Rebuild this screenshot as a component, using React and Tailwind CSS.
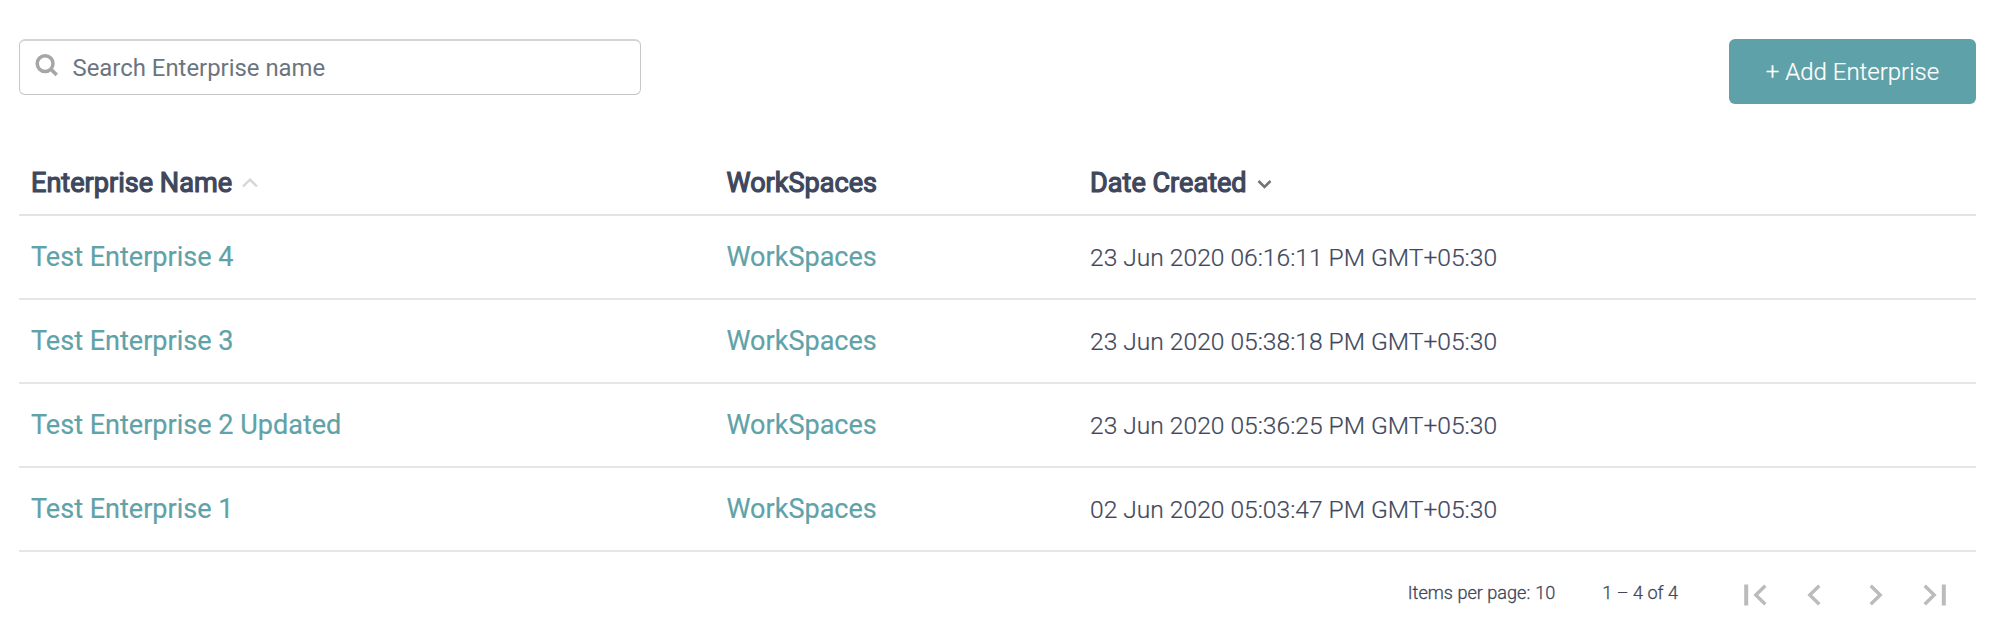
import React from 'react';

const rows = [
  { name: 'Test Enterprise 4', created: '23 Jun 2020 06:16:11 PM GMT+05:30' },
  { name: 'Test Enterprise 3', created: '23 Jun 2020 05:38:18 PM GMT+05:30' },
  { name: 'Test Enterprise 2 Updated', created: '23 Jun 2020 05:36:25 PM GMT+05:30' },
  { name: 'Test Enterprise 1', created: '02 Jun 2020 05:03:47 PM GMT+05:30' },
];

function SearchIcon() {
  return (
    <svg className="size-6" viewBox="0 0 24 24" fill="none" stroke="#a6a6a6">
      <circle cx="10.1" cy="10.6" r="7.9" strokeWidth="3.5" />
      <path d="M15.7 16.1 L21.7 22.1" strokeWidth="3.6" />
    </svg>
  );
}

function PageIcon({ d, bar }) {
  return (
    <svg className="h-6 w-6" viewBox="0 0 24 24" fill="none" stroke="#bbbbbb">
      <path d={d} strokeWidth="3.4" />
      {bar !== undefined && <path d={bar} strokeWidth="4" />}
    </svg>
  );
}

function Toolbar() {
  return (
    <div className="flex items-start justify-between">
      <label className="flex h-14 w-[622px] items-center rounded-[6px] border-x border-b border-t-2 border-x-[#c8c8c8] border-b-[#c4c4c4] border-t-[#d4d4d4] pl-[15px]">
        <span className="-mt-1.5">
          <SearchIcon />
        </span>
        <input
          className="ml-[13.5px] mt-px min-w-0 flex-1 bg-transparent text-[23.9px] leading-8 outline-none placeholder:text-[#6c757d] placeholder:opacity-100"
          placeholder="Search Enterprise name"
        />
      </label>
      <button className="flex h-[65px] w-[247px] items-center justify-center rounded-[6px] bg-[#5fa1a8] text-[24px] font-light leading-8 text-white [-webkit-text-stroke:0.2px_white]">
        + Add Enterprise
      </button>
    </div>
  );
}

function EnterpriseTable() {
  return (
    <div className="mt-12 flex flex-col">
      <div className="grid h-[64px] grid-cols-[695.5px_363.5px_1fr] items-center border-b-2 border-[#e4e4e4] pl-3 text-[27.1px] leading-8 text-[#3f475c] [-webkit-text-stroke:1.2px_#3f475c]">
        <div className="flex items-center">
          Enterprise Name
          <svg className="ml-[10px] h-4 w-4" viewBox="0 0 16 16" fill="none" stroke="#d6d6d6" strokeWidth="2.4">
            <path d="M1 11.5 L8 4.7 L15 11.5" />
          </svg>
        </div>
        <div>WorkSpaces</div>
        <div className="flex items-center">
          Date Created
          <svg className="ml-[10.5px] h-4 w-4" viewBox="0 0 16 16" fill="none" stroke="#757575" strokeWidth="2.6">
            <path d="M1.5 6 L7.5 12 L13.5 6" />
          </svg>
        </div>
      </div>
      {rows.map((row) => (
        <div
          key={row.name}
          className="grid h-[84px] grid-cols-[695.5px_363.5px_1fr] items-center border-b-2 border-[#e6e6e6] pl-3 leading-8"
        >
          <a className="text-[27.05px] text-[#5fa2a8] [-webkit-text-stroke:0.2px_#5fa2a8]">{row.name}</a>
          <a className="text-[27.05px] text-[#5fa2a8] [-webkit-text-stroke:0.2px_#5fa2a8]">WorkSpaces</a>
          <div className="pt-px text-[24.6px] font-light text-[#3f475c] [-webkit-text-stroke:0.2px_#3f475c]">
            {row.created}
          </div>
        </div>
      ))}
    </div>
  );
}

function Paginator() {
  return (
    <div className="flex h-[78px] items-center justify-end pr-[29.5px] pt-[3px] text-[18.1px] font-light leading-6 text-[#3f475c] [-webkit-text-stroke:0.3px_#3f475c]">
      <span>Items per page:</span>
      <span className="ml-[5px]">10</span>
      <span className="ml-[47px] mr-[64.5px]">1 – 4 of 4</span>
      <div className="flex items-center gap-9 pt-[5px]">
        <PageIcon d="M22.3 2.7 L12.8 12 L22.3 21.3" bar="M3.2 1.5 V22.5" />
        <PageIcon d="M16.3 2.7 L6.8 12 L16.3 21.3" />
        <PageIcon d="M7.7 2.7 L17.2 12 L7.7 21.3" />
        <PageIcon d="M1.7 2.7 L11.2 12 L1.7 21.3" bar="M20.8 1.5 V22.5" />
      </div>
    </div>
  );
}

export default function App() {
  return (
    <main className="h-[630px] w-full bg-white pl-[19px] pr-[23px] pt-[39px] font-['Roboto',sans-serif]">
      <Toolbar />
      <EnterpriseTable />
      <Paginator />
    </main>
  );
}
